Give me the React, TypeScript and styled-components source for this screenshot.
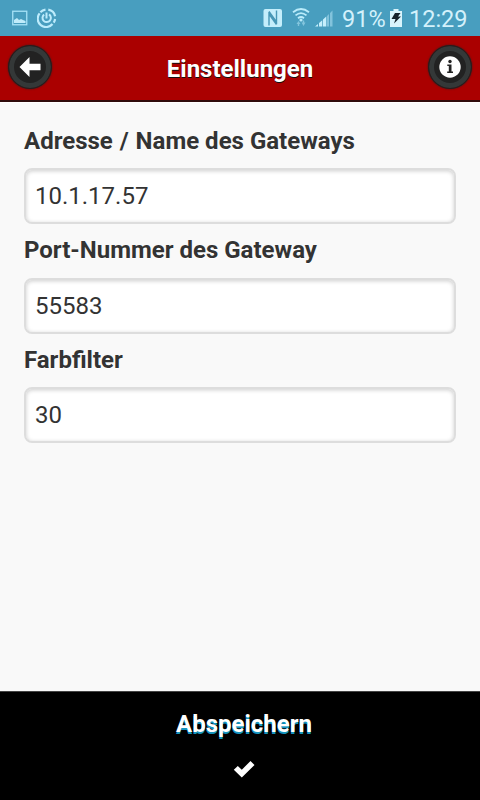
import React, { useState } from "react";
import styled, { createGlobalStyle } from "styled-components";

const GlobalStyle = createGlobalStyle`
  * { box-sizing: border-box; }
  html, body { margin: 0; padding: 0; }
  body { font-family: Roboto, "Noto Sans", sans-serif; background: #f9f9f9; }
`;

const Screen = styled.div`
  display: flex;
  flex-direction: column;
  width: 480px;
  height: 800px;
  overflow: hidden;
  background: #f9f9f9;
`;

const StatusBar = styled.div`
  display: flex;
  align-items: center;
  flex: none;
  height: 36px;
  padding: 0 11px;
  background: #489ebf;
  color: #d3f1fb;
  font-size: 23.5px;
  line-height: 36px;
`;

const StatusIcon = styled.svg<{ $gap?: number }>`
  flex: none;
  margin-left: ${(p) => p.$gap ?? 0}px;
`;

const StatusSpacer = styled.div`
  flex: 1;
`;

const StatusText = styled.span<{ $width: number; $gap: number }>`
  width: ${(p) => p.$width}px;
  margin-left: ${(p) => p.$gap}px;
  padding-top: 2px;
  white-space: nowrap;
`;

const Header = styled.header`
  display: flex;
  align-items: center;
  justify-content: space-between;
  flex: none;
  height: 66px;
  padding: 0 8px 2px;
  background: #aa0000;
  border-bottom: 2px solid #300b0b;
`;

const Title = styled.h1`
  margin: 0;
  padding-top: 3px;
  color: #fff;
  font-size: 24px;
  font-weight: 700;
  line-height: 30px;
  text-shadow: 0 1px 0 #111;
`;

const RoundButton = styled.button`
  display: flex;
  align-items: center;
  justify-content: center;
  width: 44px;
  height: 44px;
  padding: 0;
  border: 1px solid #2a1c1c;
  border-radius: 50%;
  background: #222;
  box-shadow: inset 0 0 0 5px #343838, 0 0 2px #222;
`;

const Form = styled.main`
  flex: 1;
  padding: 11px 24px 0;
  border-top: 1px solid #fff;
`;

const Field = styled.label`
  display: block;
  height: 109.4px;
`;

const FieldLabel = styled.span`
  display: block;
  height: 54.2px;
  color: #333;
  font-size: 24px;
  font-weight: 700;
  line-height: 54px;
  white-space: nowrap;
  text-shadow: 0 1px 0 #fff;
`;

const Slash = styled.span`
  margin: 0 1px;
`;

const FieldInput = styled.input`
  display: block;
  width: 100%;
  height: 56px;
  padding: 0 9px;
  border: 2px solid #ddd;
  border-radius: 8px;
  outline: none;
  background: #fff;
  box-shadow: inset 0 1px 4px rgba(0, 0, 0, 0.2);
  color: #333;
  font-family: inherit;
  font-size: 24px;
`;

const SaveButton = styled.button`
  display: flex;
  flex-direction: column;
  align-items: center;
  flex: none;
  width: 100%;
  height: 109px;
  padding: 16px 0 0 8px;
  border: 0;
  border-top: 1px solid #444;
  background: #000;
  color: #fff;
  font-family: inherit;
  font-size: 24px;
  font-weight: 700;
  line-height: 32px;
  text-shadow: 0 2px 0 #1593bd;
`;

const CheckIcon = styled.svg`
  margin-top: 19px;
`;

const FIELDS = [
  {
    id: "address",
    label: (
      <>
        Adresse <Slash>/</Slash> Name des Gateways
      </>
    ),
    value: "10.1.17.57",
  },
  { id: "port", label: "Port-Nummer des Gateway", value: "55583" },
  { id: "filter", label: "Farbfilter", value: "30" },
];

function Status() {
  return (
    <StatusBar>
      <StatusIcon width="16" height="16" viewBox="0 0 16 16" $gap={1}>
        <rect x="0.75" y="1.25" width="14" height="13.5" fill="none" stroke="#a6e2f7" strokeWidth="1.3" />
        <path d="M2 13V10l3-2 2 2 2-1 2 1 2.5 1v2z" fill="#c0ecfa" />
      </StatusIcon>
      <StatusIcon width="20" height="20" viewBox="0 0 20 20" $gap={9} fill="none" stroke="#bdecfc">
        <path d="M8.5 1.6A8.3 8.3 0 0 0 3.4 4.3M2.6 5.4A8.3 8.3 0 0 0 15.5 16" strokeWidth="2.2" />
        <path d="M11.3 1.6A8.3 8.3 0 0 1 18.1 8.3M18.1 11A8.3 8.3 0 0 1 16.7 14.6" strokeWidth="2.2" />
        <path d="M7.1 6.6A4.2 4.2 0 1 0 12 6.4" strokeWidth="2" />
        <path d="M9.5 4.5v6" strokeWidth="2" />
      </StatusIcon>
      <StatusSpacer />
      <StatusIcon width="20" height="20" viewBox="0 0 20 20">
        <rect x="0.5" y="1" width="18.5" height="18" rx="2" fill="#c4eefb" />
        <path d="M6 17.5V6l7.5 10.5M13.5 2.5V14L6 3.5" fill="none" stroke="#4797b6" strokeWidth="1.4" />
      </StatusIcon>
      <StatusIcon width="18" height="20" viewBox="0 0 18 20" $gap={9}>
        <g fill="none" stroke="#b9ebfa" strokeWidth="1.8">
          <path d="M1 4.2Q9-2.2 17 4.2" />
          <path d="M3.5 7.4Q9 2.8 14.5 7.4" />
          <path d="M6 10.3Q9 7.8 12 10.3" />
        </g>
        <circle cx="9" cy="12" r="1.6" fill="#b9ebfa" />
        <path d="M4.5 16h4l-2-3zM9.5 14.5h4l-2 3.5zM5.8 16h1.4v2H5.8zM10.8 12.5h1.4v2.5h-1.4z" fill="#83c5dd" />
      </StatusIcon>
      <StatusIcon width="20" height="20" viewBox="0 0 20 20" $gap={4}>
        <path d="M1 18.5l3-2.5v2.5z" fill="#c5effc" />
        <path d="M5 15l3.3-2.8v6.3H5zM9 11.5L12.3 8.5v10H9z" fill="#c5effc" />
        <path d="M13 8l2-2v12.5h-2zM16 5l2.5-2.5v16H16z" fill="#82c3dc" />
      </StatusIcon>
      <StatusText $width={44} $gap={8}>91%</StatusText>
      <StatusIcon width="12" height="18" viewBox="0 0 12 18" $gap={4}>
        <path d="M0 2h3.5V0h5v2H12v16H0z" fill="#d9f4fc" />
        <path d="M5 4h5.5L8 7.5h3L4 14.5 5.5 10H1.5z" fill="#15222b" />
      </StatusIcon>
      <StatusText $width={60} $gap={7}>12:29</StatusText>
    </StatusBar>
  );
}

export default function App() {
  const [values, setValues] = useState<Record<string, string>>(
    Object.fromEntries(FIELDS.map((f) => [f.id, f.value]))
  );

  return (
    <>
      <GlobalStyle />
      <Screen>
        <Status />
        <Header>
          <RoundButton aria-label="Zurück">
            <svg width="22" height="22" viewBox="0 0 22 22">
              <path d="M.5 11L10.5 1v6.8h11v6.4h-11V21z" fill="#fff" />
            </svg>
          </RoundButton>
          <Title>Einstellungen</Title>
          <RoundButton aria-label="Info">
            <svg width="22" height="22" viewBox="0 0 22 22">
              <circle cx="11" cy="11" r="10.7" fill="#fff" />
              <circle cx="11" cy="5.5" r="1.7" fill="#222" />
              <path d="M8.3 8.6h4.2v7h1.5V17H8.2v-1.4h1.6V10H8.3z" fill="#222" />
            </svg>
          </RoundButton>
        </Header>
        <Form>
          {FIELDS.map((f) => (
            <Field key={f.id}>
              <FieldLabel>{f.label}</FieldLabel>
              <FieldInput
                value={values[f.id]}
                onChange={(e) => setValues({ ...values, [f.id]: e.target.value })}
              />
            </Field>
          ))}
        </Form>
        <SaveButton>
          Abspeichern
          <CheckIcon width="22" height="20" viewBox="0 0 22 20">
            <path d="M.8 10.8L4.8 7l4 3.8L17.5 2l4 4L8.8 18.6z" fill="#fff" />
          </CheckIcon>
        </SaveButton>
      </Screen>
    </>
  );
}
